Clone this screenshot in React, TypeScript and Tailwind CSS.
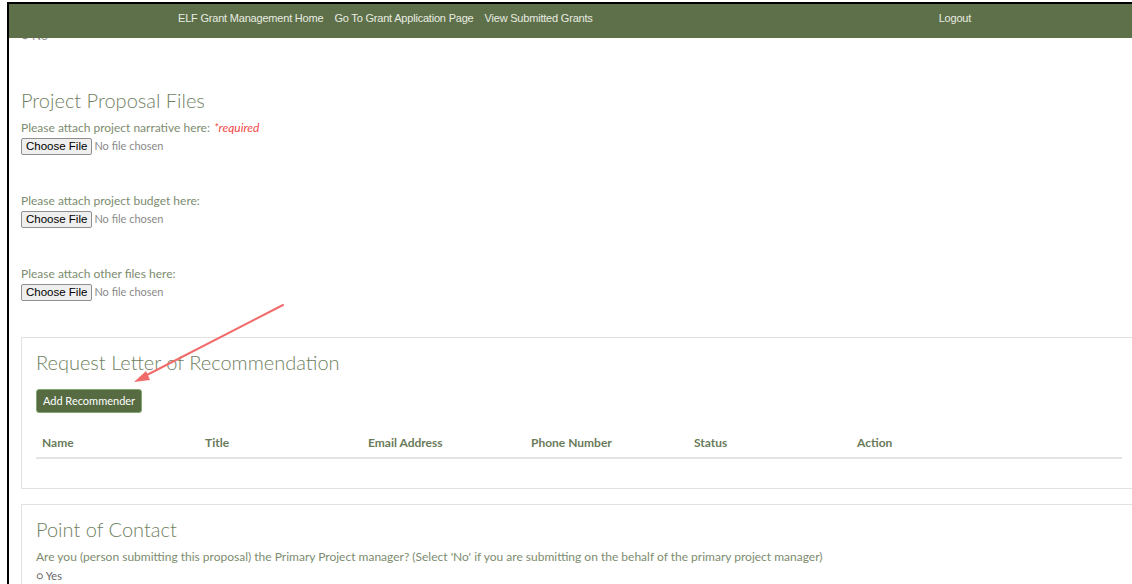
const navLinks = ["ELF Grant Management Home", "Go To Grant Application Page", "View Submitted Grants"];
const columns = ["Name", "Title", "Email Address", "Phone Number", "Status", "Action"];

function FileField({ label, required }: { label: string; required?: boolean }) {
  return (
    <div>
      <div className="text-[12px] leading-[16px] text-[#7d8c6f]">
        {label}
        {required && <span className="ml-1 italic text-[#f04848]">*required</span>}
      </div>
      <div className="mt-[2px] flex items-center">
        <button className="h-[17px] px-[4px] rounded-[2px] border border-[#8f8f8f] bg-[#efefef] font-['Liberation_Sans',sans-serif] text-[11.5px] leading-none text-black">
          Choose File
        </button>
        <span className="ml-[2px] text-[11px] text-[#8a8a8a]">No file chosen</span>
      </div>
    </div>
  );
}

export default function App() {
  return (
    <div className="relative w-[1132px] h-[584px] overflow-hidden bg-white pt-[2px] pl-[7px] font-['Lato',sans-serif]">
      <div className="h-full border-l-2 border-t-2 border-black overflow-hidden">
        {/* top bar */}
        <nav className="h-[34px] bg-[#5e7049] flex items-start pt-[6px] font-['Liberation_Sans',sans-serif] text-[11px] tracking-[-0.2px] text-[#e8ece2]">
          <div className="ml-[169px] flex gap-[11px]">
            {navLinks.map((l) => (
              <span key={l}>{l}</span>
            ))}
          </div>
          <span className="ml-[346px]">Logout</span>
        </nav>

        {/* tail of the previous question, scrolled under the bar */}
        <div className="h-[6px] overflow-hidden pl-[12px]">
          <div className="-mt-[10px] text-[12px] leading-[16px] text-[#8a8a8a]">○ No</div>
        </div>

        <div className="pl-[12px]">
          <h2 className="mt-[44px] text-[20px] leading-[24px] font-light text-[#6f805f]">Project Proposal Files</h2>
          <div className="mt-[8px] flex flex-col gap-[38px]">
            <FileField label="Please attach project narrative here:" required />
            <FileField label="Please attach project budget here:" />
            <FileField label="Please attach other files here:" />
          </div>

          {/* recommendation letters */}
          <section className="mt-[36px] w-[1116px] border border-[#e2e2e2] px-[14px] pt-[12px] pb-[29px]">
            <h2 className="text-[20px] leading-[24px] font-light text-[#6f805f]">Request Letter of Recommendation</h2>
            <button className="mt-[15px] h-[24px] w-[106px] rounded-[3px] border border-[#84a872] bg-[#566b42] text-[11px] text-white">
              Add Recommender
            </button>
            <div className="mt-[15px] w-[1086px] h-[31px] flex items-center border-b-2 border-[#e4e4e4]">
              {columns.map((c) => (
                <div key={c} className="w-[163px] px-[6px] text-[12px] font-bold text-[#6a7b5a]">
                  {c}
                </div>
              ))}
            </div>
          </section>

          {/* point of contact */}
          <section className="mt-[15px] w-[1116px] h-[100px] border border-[#e2e2e2] px-[14px] pt-[12px]">
            <h2 className="text-[20px] leading-[24px] font-light text-[#6f805f]">Point of Contact</h2>
            <p className="mt-[8px] text-[12px] leading-[16px] text-[#7d8c6f]">
              Are you (person submitting this proposal) the Primary Project manager? (Select 'No' if you are submitting on the behalf of the primary project manager)
            </p>
            <div className="mt-[3px] text-[11px] leading-[16px] text-[#666]">○ Yes</div>
          </section>
        </div>
      </div>

      {/* annotation arrow */}
      <svg className="absolute inset-0 pointer-events-none" width="1132" height="584">
        <line x1="283" y1="305" x2="143" y2="377" stroke="#f26b6b" strokeWidth="2" strokeLinecap="round" />
        <polygon points="134,382 146,371 150,380" fill="#f26b6b" />
      </svg>
    </div>
  );
}
